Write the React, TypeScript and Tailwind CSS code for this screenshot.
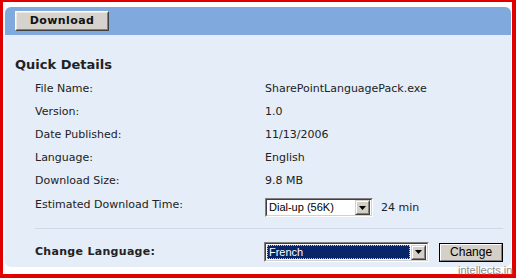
import type { ReactNode } from 'react'

const rows: [string, string][] = [
  ['File Name:', 'SharePointLanguagePack.exe'],
  ['Version:', '1.0'],
  ['Date Published:', '11/13/2006'],
  ['Language:', 'English'],
  ['Download Size:', '9.8 MB'],
]

function Arrow() {
  return (
    <div className="flex h-[15px] w-[15px] items-center justify-center border border-t-[#d4d0c8] border-l-[#d4d0c8] border-r-[#404040] border-b-[#404040] bg-[#d4d0c8]">
      <div className="flex h-full w-full items-center justify-center border border-t-white border-l-white border-r-[#808080] border-b-[#808080]">
        <svg width="7" height="4" viewBox="0 0 7 4">
          <path d="M0 0h7L3.5 4z" fill="#000" />
        </svg>
      </div>
    </div>
  )
}

function Combo({ width, children }: { width: string; children: ReactNode }) {
  return (
    <div className={`${width} border border-t-[#808080] border-l-[#808080] border-r-white border-b-white`}>
      <div className="flex h-full items-center border border-t-[#404040] border-l-[#404040] border-r-[#d4d0c8] border-b-[#d4d0c8] bg-white pr-px">
        {children}
      </div>
    </div>
  )
}

export default function App() {
  return (
    <div className="relative h-[278px] w-[516px] overflow-hidden bg-white font-['DejaVu_Sans',sans-serif] text-[11px] text-[#222]">
      <div className="h-full w-full border-t-[2px] border-l-[3px] border-r-[4px] border-b-[4px] border-[#e00000] bg-white pb-[7px] pl-[2px] pr-px pt-[5px]">
        <div className="flex h-full flex-col overflow-hidden rounded-[6px] bg-[#e4edf8]">
          <div className="flex h-[28px] shrink-0 items-start bg-[#80aadd] pl-[10px] pt-[4px]">
            <div className="h-[20px] w-[94px] border border-t-white border-l-white border-r-[#404040] border-b-[#404040] bg-[#d6d3ce]">
              <div className="flex h-full items-center justify-center border border-t-[#ece9e4] border-l-[#ece9e4] border-r-[#808080] border-b-[#808080] text-[11px] font-bold tracking-[0.4px] text-[#111]">
                Download
              </div>
            </div>
          </div>

          <div className="pl-[10px] pr-[8px]">
            <div className="mt-[22px] text-[13px] font-bold leading-[16px] text-[#222]">Quick Details</div>
            <div className="mt-[5px] pl-[20px]">
              {rows.map(([k, v]) => (
                <div key={k} className="flex h-[23px] items-center">
                  <div className="w-[230px]">{k}</div>
                  <div>{v}</div>
                </div>
              ))}
              <div className="flex h-[26px] items-start">
                <div className="w-[230px] leading-[23px]">Estimated Download Time:</div>
                <div className="mt-[5px] flex items-center gap-[8px]">
                  <Combo width="h-[19px] w-[108px]">
                    <div className="flex-1 pl-[2px] font-['Liberation_Sans',sans-serif] text-[11px] text-black">Dial-up (56K)</div>
                    <Arrow />
                  </Combo>
                  <span className="mt-[1px]">24 min</span>
                </div>
              </div>
              <div className="mt-[9px] h-px bg-[#cfdae7]" />
              <div className="mt-[13px] flex h-[20px] items-center">
                <div className="w-[230px] font-bold tracking-[0.3px]">Change Language:</div>
                <Combo width="h-[20px] w-[166px]">
                  <div className="mx-[1px] flex h-[14px] flex-1 items-center border border-dotted border-[#ffcc00] bg-[#0a246a] pl-[1px] font-['Liberation_Sans',sans-serif] text-[11px] text-white">
                    French
                  </div>
                  <Arrow />
                </Combo>
                <div className="ml-[10px] h-[19px] w-[64px] border border-black bg-[#d4d0c8]">
                  <div className="flex h-full items-center justify-center border border-t-white border-l-white border-r-[#808080] border-b-[#808080] font-['Liberation_Sans',sans-serif] text-[12px] text-black">
                    Change
                  </div>
                </div>
              </div>
            </div>
          </div>
        </div>
      </div>
      <div className="absolute left-[458px] top-[264px] font-['Liberation_Sans',sans-serif] text-[11px] leading-[13px] text-[#8a8a8a] [text-shadow:0_0_1px_#fff,0_0_1px_#fff]">
        intellects.in
      </div>
    </div>
  )
}
